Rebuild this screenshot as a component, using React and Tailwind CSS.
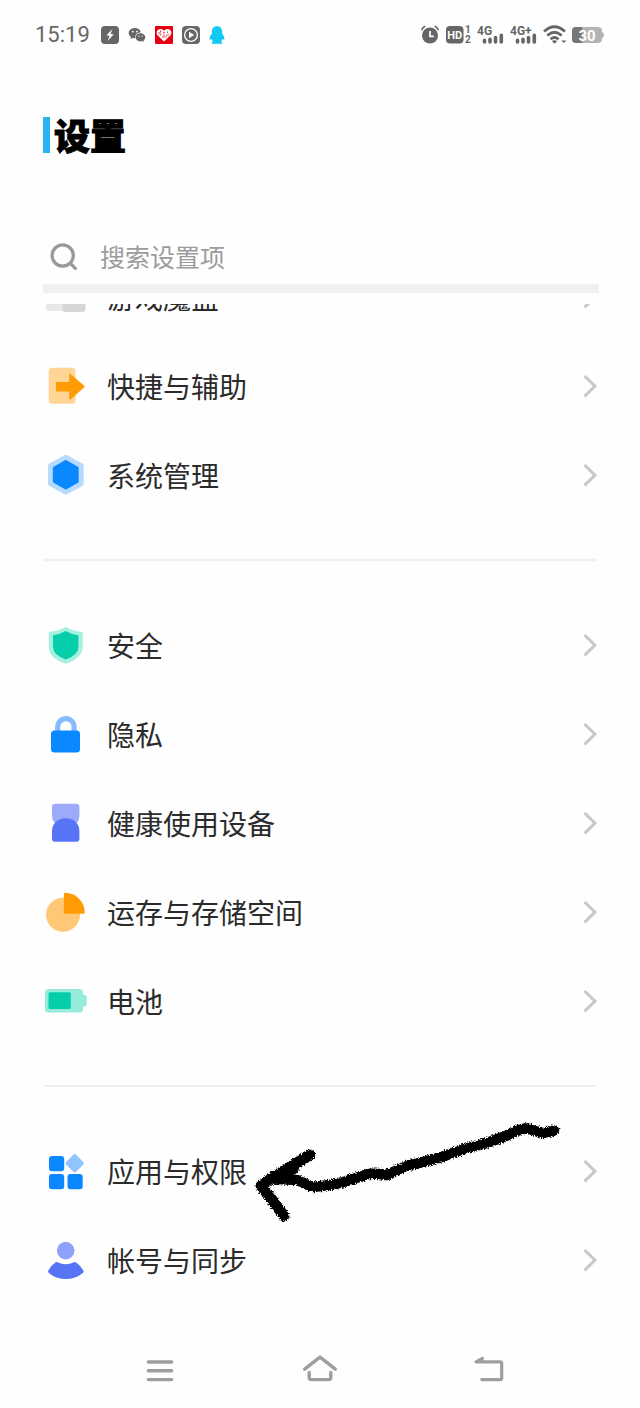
import { useState } from 'react';

const GameIcon = () => (
  <svg className="h-[45px] w-[46px] shrink-0" viewBox="0 0 46 45">
    <rect x="3" y="10" width="30" height="26" rx="3" fill="#e8e8e8" />
    <rect x="19.5" y="12" width="23" height="25" rx="3" fill="#d6d6d6" />
  </svg>
);

const ShortcutIcon = () => (
  <svg className="h-[45px] w-[46px] shrink-0" viewBox="0 0 46 45">
    <rect x="5.7" y="3.7" width="26.8" height="36" rx="3.5" fill="#ffd596" />
    <path
      d="M14 18H26.2V11Q26.2 9 27.8 10.3L41 21.4Q42.3 22.5 41 23.6L27.8 35.2Q26.2 36.4 26.2 34.4V27.4H14Q13 27.4 13 26.4V19Q13 18 14 18Z"
      fill="#ff9b05"
    />
  </svg>
);

const SystemIcon = () => (
  <svg className="h-[45px] w-[46px] shrink-0" viewBox="0 0 46 45">
    <path d="M22.8 3.7L38.7 12.5V30.9L22.8 39.7L7 30.9V12.5Z" fill="#b8daff" stroke="#b8daff" strokeWidth="4" strokeLinejoin="round" />
    <path d="M22.8 8.5L34.2 15V28.4L22.8 34.9L11.3 28.4V15Z" fill="#0a88ff" stroke="#0a88ff" strokeWidth="3" strokeLinejoin="round" />
  </svg>
);

const SecurityIcon = () => (
  <svg className="h-[45px] w-[46px] shrink-0" viewBox="0 0 46 45">
    <path d="M22.7 4Q30 8 38.6 8.8Q39.8 9 39.8 10V23Q39.8 35.5 22.7 40.8Q5.7 35.5 5.7 23V10Q5.7 9 6.8 8.8Q15.5 8 22.7 4Z" fill="#a6f0e0" />
    <path d="M22.7 8Q28.5 11.4 34.5 12Q35.4 12.2 35.4 13V23.5Q35.4 32 22.7 36.5Q10 32 10 23.5V13Q10 12.2 10.9 12Q17 11.4 22.7 8Z" fill="#06ceab" />
  </svg>
);

const PrivacyIcon = () => (
  <svg className="h-[45px] w-[46px] shrink-0" viewBox="0 0 46 45">
    <path d="M14.7 22V14.8A8.2 8.2 0 0 1 31.1 14.8V22" fill="none" stroke="#85bcff" strokeWidth="5.2" />
    <rect x="8" y="18.6" width="29" height="21.8" rx="3.5" fill="#0a88ff" />
  </svg>
);

const HealthIcon = () => (
  <svg className="h-[45px] w-[46px] shrink-0" viewBox="0 0 46 45">
    <path d="M12 2.7H33.4Q36.4 2.7 36.4 5.7V15Q36.4 19 33.5 22.5H12Q9 19 9 15V5.7Q9 2.7 12 2.7Z" fill="#9da9fb" />
    <path d="M22.7 17.2C31 17.2 36.4 23 36.4 30V37.8Q36.4 40.8 33.4 40.8H12Q9 40.8 9 37.8V30C9 23 14.4 17.2 22.7 17.2Z" fill="#5874f6" />
  </svg>
);

const StorageIcon = () => (
  <svg className="h-[45px] w-[46px] shrink-0" viewBox="0 0 46 45">
    <circle cx="20" cy="24.7" r="17" fill="#ffc877" />
    <path d="M22 2.7A20 20 0 0 1 41.8 22.8Q41.8 23.8 40.8 23.8H21.9Q20.9 23.8 20.9 22.8V3.7Q20.9 2.7 22 2.7Z" fill="#ff9b05" />
  </svg>
);

const BatteryIcon = () => (
  <svg className="h-[45px] w-[46px] shrink-0" viewBox="0 0 46 45">
    <rect x="2" y="10" width="38" height="23.5" rx="3.5" fill="#96ecdb" />
    <path d="M39 15.7H40.7Q43.8 15.7 43.8 18.5V25Q43.8 27.7 40.7 27.7H39Z" fill="#96ecdb" />
    <rect x="5.5" y="13.3" width="22.3" height="16.8" rx="1.5" fill="#06ceab" />
  </svg>
);

const AppsIcon = () => (
  <svg className="h-[45px] w-[46px] shrink-0" viewBox="0 0 46 45">
    <rect x="6" y="7" width="15.2" height="15.2" rx="3" fill="#0a88ff" />
    <rect x="6" y="25" width="15.2" height="15.2" rx="3" fill="#0a88ff" />
    <rect x="24.5" y="25" width="15.2" height="15.2" rx="3" fill="#0a88ff" />
    <rect x="24.7" y="7.3" width="14" height="14" rx="2" fill="#91c4ff" transform="rotate(45 31.7 14.3)" />
  </svg>
);

const AccountIcon = () => (
  <svg className="h-[45px] w-[46px] shrink-0" viewBox="0 0 46 45">
    <circle cx="22.7" cy="12.6" r="8.8" fill="#8ea0fa" />
    <path d="M14.5 24.3Q22.7 28.2 31 24.3Q32.2 23.8 33.2 24.5Q37.5 27.5 40.4 32.4Q41.1 33.8 39.8 34.9Q32.5 41 22.8 41Q13 41 5.9 34.9Q4.6 33.8 5.3 32.4Q8 27.5 12.3 24.5Q13.3 23.8 14.5 24.3Z" fill="#5874f6" />
  </svg>
);

const Chevron = () => (
  <svg className="h-[23px] w-[14px] shrink-0" viewBox="0 0 14 23">
    <path d="M1.5 1L12 11.2L1.5 21.4" fill="none" stroke="#c8c8c8" strokeWidth="3" />
  </svg>
);

// hand drawn marker pointing at the apps row
const BrushArrow = () => (
  <svg className="pointer-events-none absolute -top-[7px] left-[207px] h-[110px] w-80" viewBox="0 0 320 110">
    <defs>
      <filter id="brush" x="-5%" y="-20%" width="110%" height="140%">
        <feTurbulence type="fractalNoise" baseFrequency="0.7" numOctaves="2" seed="4" result="noise" />
        <feDisplacementMap in="SourceGraphic" in2="noise" scale="5" xChannelSelector="R" yChannelSelector="G" />
      </filter>
    </defs>
    <g fill="none" stroke="#000" strokeLinecap="round" strokeLinejoin="round" filter="url(#brush)">
      <path
        strokeWidth="10.5"
        d="M304 10.5L300 11.5Q291 14.5 286 11Q280 8 275 8.5Q267 10 257 15.5L237 23L214 29L190 37.5L157 46Q147 50 137 55Q126 53 118 54L94 62L80 65L63 67L47 60L27 59"
      />
      <path strokeWidth="11" d="M60 35L37 49L23 57L11 66L20 77L34 96" />
      <path strokeWidth="14" d="M42 48L25 58" />
    </g>
  </svg>
);

const sections = [
  [
    { label: '快捷与辅助', Icon: ShortcutIcon },
    { label: '系统管理', Icon: SystemIcon },
  ],
  [
    { label: '安全', Icon: SecurityIcon },
    { label: '隐私', Icon: PrivacyIcon },
    { label: '健康使用设备', Icon: HealthIcon },
    { label: '运存与存储空间', Icon: StorageIcon },
    { label: '电池', Icon: BatteryIcon },
  ],
  [
    { label: '应用与权限', Icon: AppsIcon, marked: true },
    { label: '帐号与同步', Icon: AccountIcon },
  ],
];

const SettingRow = ({ label, Icon }) => (
  <button type="button" className="flex h-[89px] w-full shrink-0 items-center gap-[18px] text-left">
    <Icon />
    <span className="grow pb-[2px] text-[28px] leading-10 text-[#2b2b2b]">{label}</span>
    <Chevron />
  </button>
);

const SignalIcon = ({ label }) => (
  <svg className="h-5 w-7" viewBox="0 0 28 20">
    <text x="0" y="10" fontSize="12" fontWeight="700" fill="#666">{label}</text>
    <g stroke="#666" strokeWidth="3.6" strokeLinecap="round">
      <path d="M7.5 15.2V17M13 14.2V17M18.5 12.5V17M24.3 10.3V17" />
    </g>
  </svg>
);

const StatusBar = () => (
  <div className="flex h-[70px] items-center justify-between pr-9 pl-[35px] font-['Roboto','Liberation_Sans',sans-serif]">
    <div className="flex items-center gap-[9px]">
      <span className="w-[57px] text-[22px] leading-6 text-[#666]">15:19</span>
      <svg className="h-[18px] w-[18px]" viewBox="0 0 18 18">
        <rect width="18" height="18" rx="4" fill="#666" />
        <path d="M11.5 3L5.5 9.3L8.6 10L6.6 15L12.6 8.6L9.5 7.8Z" fill="#fff" />
      </svg>
      <svg className="h-[18px] w-[18px]" viewBox="0 0 18 18">
        <path d="M7 2C3.3 2 .7 4.2 .7 7.1C.7 8.8 1.6 10.2 3 11.1L2.5 13L4.8 11.9Q6 12.3 7.3 12.2C6.6 8.8 9.3 6.2 12.9 6.4C12.4 3.8 10 2 7 2Z" fill="#666" />
        <path d="M12.4 7.2C9.7 7.2 7.6 9 7.6 11.3S9.7 15.4 12.4 15.4Q13.3 15.4 14.2 15.1L16 16L15.5 14.4C16.6 13.6 17.3 12.6 17.3 11.3C17.3 9 15 7.2 12.4 7.2Z" fill="#666" />
        <g fill="#fff">
          <circle cx="4.8" cy="5.6" r=".9" />
          <circle cx="9" cy="5.6" r=".9" />
          <circle cx="10.9" cy="10.1" r=".7" />
          <circle cx="14" cy="10.1" r=".7" />
        </g>
      </svg>
      <svg className="h-[18px] w-[18px]" viewBox="0 0 18 18">
        <rect width="18" height="18" rx="1" fill="#e60012" />
        <path d="M9 15.5L2.4 9.2C.5 6.5 2.5 3 5.5 3Q7.8 3 9 4.8Q10.2 3 12.5 3C15.5 3 17.5 6.5 15.6 9.2Z" fill="#fff" />
        <path d="M3 7H6M5.5 4.5V6M4.5 9.5L6.5 8.5M8 7L10 6.5M9 8.5V12M11.5 9H14M12.5 5.5V7M7 11L8 10.5M10.5 11L12 10.5" stroke="#e60012" strokeWidth=".8" />
      </svg>
      <svg className="h-[18px] w-[18px]" viewBox="0 0 18 18">
        <rect width="18" height="18" rx="4" fill="#666" />
        <circle cx="9" cy="9" r="6.4" fill="none" stroke="#fff" strokeWidth="1.3" />
        <path d="M7 5.8L12.2 9L7 12.2Z" fill="#fff" />
      </svg>
      <svg className="h-[18px] w-[18px]" viewBox="0 0 18 18">
        <path d="M8 .2C4.7 .2 2.9 2.4 2.9 5.5V7.6Q.6 10.3 .5 13Q.6 14.4 2.6 12.9Q3 14.4 4 15.4Q2.5 16 2.6 17.8H13.4Q13.5 16 12 15.4Q13 14.4 13.4 12.9Q15.4 14.4 15.5 13Q15.4 10.3 13.1 7.6V5.5C13.1 2.4 11.3 .2 8 .2Z" fill="#12c8f5" />
      </svg>
    </div>
    <div className="flex items-center gap-[5px]">
      <svg className="h-5 w-5" viewBox="0 0 20 20">
        <circle cx="9" cy="10.5" r="8" fill="#666" />
        <path d="M9 6V11.3H12.8" fill="none" stroke="#fff" strokeWidth="1.7" />
        <path d="M1 4.5Q1.7 2.6 3.6 1.5M17 4.5Q16.3 2.6 14.4 1.5" fill="none" stroke="#666" strokeWidth="1.7" strokeLinecap="round" />
      </svg>
      <svg className="h-5 w-[26px]" viewBox="0 0 26 20">
        <rect y="1" width="17.5" height="17.5" rx="4" fill="#666" />
        <text x="8.8" y="14" textAnchor="middle" fontSize="11" fontWeight="700" fill="#fff">HD</text>
        <text x="19" y="8" fontSize="10" fontWeight="700" fill="#666">1</text>
        <text x="19" y="18" fontSize="10" fontWeight="700" fill="#666">2</text>
      </svg>
      <SignalIcon label="4G" />
      <SignalIcon label="4G+" />
      <svg className="h-5 w-6" viewBox="0 0 24 20">
        <g fill="none" stroke="#666" strokeWidth="2.7">
          <path d="M1 6.5Q11.5 -3 22 6.5" />
          <path d="M4.3 10.5Q11.5 4 18.7 10.5" />
          <path d="M7.5 14.3Q11.5 10.7 15.5 14.3" />
        </g>
        <path d="M8.8 16Q11.5 14.3 14.2 16L11.5 18.8ZM18.4 15.5H23.4L20.9 18Z" fill="#666" />
      </svg>
      <svg className="h-5 w-8" viewBox="0 0 32 20">
        <rect y="2" width="30" height="16" rx="4" fill="#b3b3b3" />
        <path d="M4 2H10V18H4Q0 18 0 14V6Q0 2 4 2Z" fill="#777" />
        <path d="M30 7Q32 7.5 32 10Q32 12.5 30 13Z" fill="#b3b3b3" />
        <text x="15" y="15.5" textAnchor="middle" fontSize="15" fontWeight="700" fill="#fff">30</text>
      </svg>
    </div>
  </div>
);

const NavBar = () => (
  <nav className="mt-auto grid h-[76px] grid-cols-3 place-items-center px-20">
    <button type="button" aria-label="最近任务">
      <svg className="h-12 w-12" viewBox="0 0 48 48" fill="none" stroke="#9e9e9e" strokeWidth="3.4" strokeLinecap="round">
        <path d="M12.3 16H35.7M12.3 24.7H35.7M12.3 33.6H35.7" />
      </svg>
    </button>
    <button type="button" aria-label="主屏幕">
      <svg className="h-12 w-12" viewBox="0 0 48 48" fill="none" stroke="#9e9e9e" strokeWidth="3.4" strokeLinecap="round" strokeLinejoin="round">
        <path d="M8.7 23.2L24 11.2L39.3 23.2" />
        <path d="M13.2 26.5V31.6Q13.2 33.6 15.2 33.6H32.8Q34.8 33.6 34.8 31.6V26.5" />
      </svg>
    </button>
    <button type="button" aria-label="返回">
      <svg className="h-12 w-12" viewBox="0 0 48 48" fill="none" stroke="#9e9e9e" strokeWidth="3.2" strokeLinecap="round" strokeLinejoin="round">
        <path d="M26.5 12.4L20 15.8H44Q45.7 15.8 45.7 17.5V31.9Q45.7 33.6 44 33.6H25.8" />
      </svg>
    </button>
  </nav>
);

const App = () => {
  const [query, setQuery] = useState('');

  const handleQueryChange = (e) => {
    setQuery(e.target.value);
  };

  return (
    <div className="flex min-h-screen flex-col bg-[#fefefe] font-['Noto_Sans_CJK_SC',sans-serif]">
      <StatusBar />
      <header className="flex h-[130px] items-center gap-1 px-[43px]">
        <span className="h-9 w-[7px] bg-[#28b4f0]" />
        <h1 className="pb-[2px] text-[36px] leading-10 font-black text-black [-webkit-text-stroke:1px]">设置</h1>
      </header>
      <label className="mt-[30px] mr-[41px] ml-[43px] flex h-[63px] items-center gap-5 border-b-[9px] border-[#f0f0f0] pl-[7px]">
        <svg className="h-7 w-[30px] shrink-0" viewBox="0 0 30 28" fill="none" stroke="#999" strokeWidth="3.2">
          <circle cx="12.7" cy="12.5" r="10.6" />
          <path d="M20 20L26.3 26.3" />
        </svg>
        <input
          className="min-w-0 grow bg-transparent pb-[2px] text-[25px] leading-9 text-[#2b2b2b] outline-none placeholder:text-[#9c9c9c]"
          type="text"
          aria-label="搜索设置项"
          placeholder="搜索设置项"
          value={query}
          onChange={handleQueryChange}
        />
      </label>
      <main className="mt-[11px] px-[43px]">
        {/* row scrolled halfway under the search bar */}
        <div className="flex h-[38px] flex-col justify-end overflow-hidden">
          <SettingRow label="游戏魔盒" Icon={GameIcon} />
        </div>
        {sections.map((rows, index) => (
          <section key={index}>
            {index > 0 && (
              <div className="flex h-[81px] items-center pb-[2px]">
                <hr className="grow border-t-2 border-[#f0f0f0]" />
              </div>
            )}
            <ul>
              {rows.map(({ label, Icon, marked }) => (
                <li key={label} className="relative">
                  <SettingRow label={label} Icon={Icon} />
                  {marked && <BrushArrow />}
                </li>
              ))}
            </ul>
          </section>
        ))}
      </main>
      <NavBar />
    </div>
  );
};

export default App;
